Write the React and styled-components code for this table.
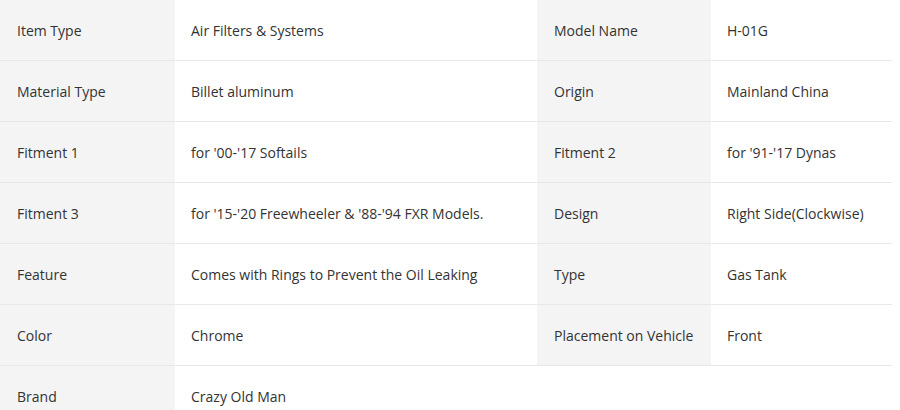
import React from "react";
import styled, { createGlobalStyle } from "styled-components";

const GlobalStyle = createGlobalStyle`
  body {
    margin: 0;
    background: #fff;
    font-family: "Open Sans", "Liberation Sans", sans-serif;
  }
`;

const SpecTable = styled.div`
  width: 892px;
  font-size: 14px;
  color: #333;
`;

const Row = styled.div`
  display: grid;
  grid-template-columns: 175px 362px 174px 181px;
  height: 60px;
  border-bottom: 1px solid #e8e8e8;
  &:last-child {
    border-bottom: none;
  }
`;

const Label = styled.div`
  display: flex;
  align-items: center;
  padding-left: 17px;
  background: #f4f4f4;
  white-space: nowrap;
`;

const Value = styled.div`
  display: flex;
  align-items: center;
  padding-left: 16px;
  background: #fff;
  white-space: nowrap;
`;

const specs = [
  ["Item Type", "Air Filters & Systems", "Model Name", "H-01G"],
  ["Material Type", "Billet aluminum", "Origin", "Mainland China"],
  ["Fitment 1", "for '00-'17 Softails", "Fitment 2", "for '91-'17 Dynas"],
  ["Fitment 3", "for '15-'20 Freewheeler & '88-'94 FXR Models.", "Design", "Right Side(Clockwise)"],
  ["Feature", "Comes with Rings to Prevent the Oil Leaking", "Type", "Gas Tank"],
  ["Color", "Chrome", "Placement on Vehicle", "Front"],
  ["Brand", "Crazy Old Man"],
];

const App = () => (
  <>
    <GlobalStyle />
    <SpecTable>
      {specs.map((row, i) => (
        <Row key={i}>
          {row.map((text, j) =>
            j % 2 === 0 ? <Label key={j}>{text}</Label> : <Value key={j}>{text}</Value>
          )}
        </Row>
      ))}
    </SpecTable>
  </>
);

export default App;
